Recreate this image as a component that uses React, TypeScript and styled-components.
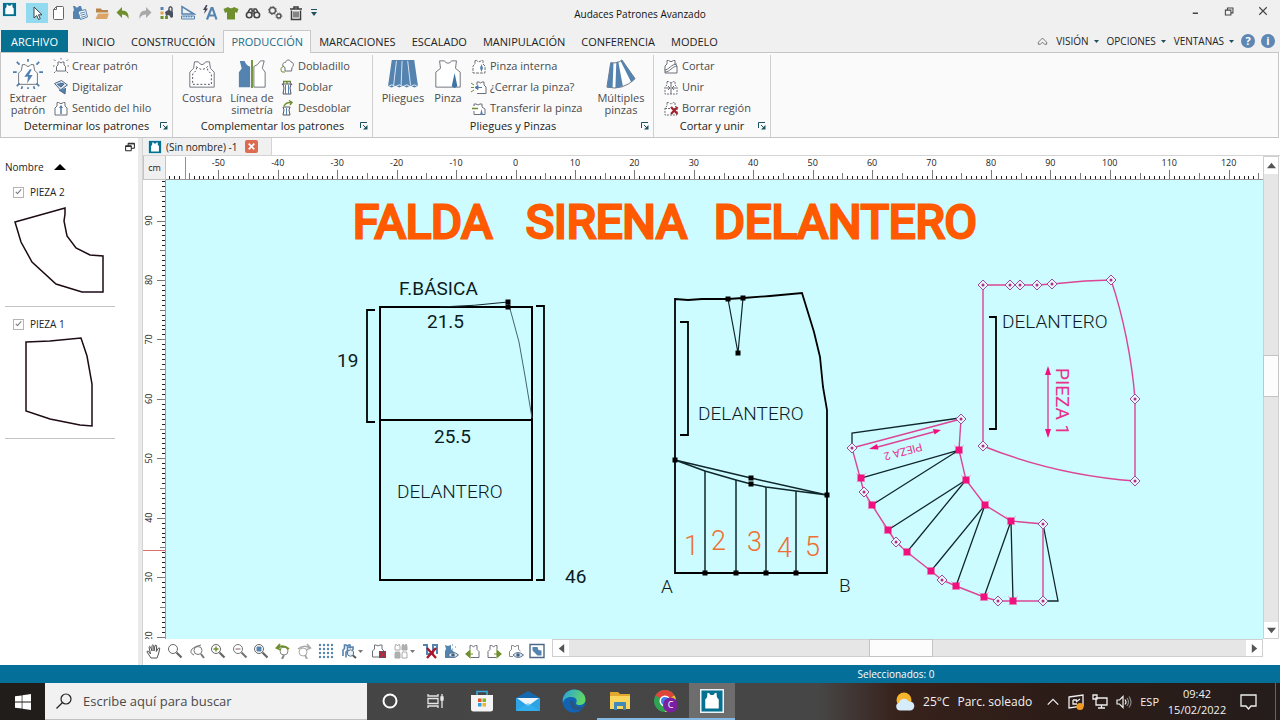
import React from "react";
import styled, { createGlobalStyle, css } from "styled-components";

const TEAL = "#04709a";
const BLUE = "#5583b0";
const GREEN = "#6f8f2e";
const GRAY = "#6b6f78";
const PINK = "#f0107e";
const UI_FONT = `"Open Sans", "Noto Sans", sans-serif`;

const GlobalStyle = createGlobalStyle`
  *, *::before, *::after { box-sizing: border-box; }
  body { margin: 0; background: #fff; font-family: ${UI_FONT}; font-size: 11px; line-height: 14px; color: #222; }
  button, input { font: inherit; color: inherit; }
  svg { display: block; flex: none; }
`;

const buttonReset = css`
  border: 0;
  padding: 0;
  margin: 0;
  background: none;
  display: flex;
  align-items: center;
  justify-content: center;
`;

const Page = styled.div`
  min-height: 100vh;
  display: flex;
  flex-direction: column;
`;

/* ---------- title bar ---------- */

const TitleBar = styled.header`
  display: grid;
  grid-template-columns: 1fr auto 1fr;
  align-items: center;
  height: 30px;
  flex: none;
  background: #f0f0f0;
`;
const QuickAccess = styled.div`
  display: flex;
  align-items: center;
  width: 320px;
  height: 26px;
  align-self: start;
`;
const QuickButton = styled.button<{ $active?: boolean; $grow?: number }>`
  ${buttonReset}
  flex: ${(p) => p.$grow ?? 22} 1 0;
  height: 20px;
  background: ${(p) => (p.$active ? "#92daf0" : "none")};
`;
const LogoSlot = styled.div`
  width: 26px;
  padding: 2px 0 0 2px;
  align-self: start;
`;
const WindowTitle = styled.h1`
  margin: 0;
  font-size: 10px;
  font-weight: 400;
  line-height: 14px;
  padding-bottom: 2px;
  color: #111;
`;
const WindowButtons = styled.div`
  display: flex;
  justify-self: end;
  align-self: start;
`;
const WindowButton = styled.button`
  ${buttonReset}
  width: 34px;
  height: 22px;
`;

/* ---------- ribbon ---------- */

const TabBar = styled.nav`
  display: flex;
  height: 22px;
  flex: none;
  padding: 0 2px 0 1px;
  background: #f0f0f0;
`;
const Tab = styled.button<{ $kind?: "file" | "active" }>`
  ${buttonReset}
  padding: 0 7px;
  border: 1px solid transparent;
  border-bottom: 0;
  ${(p) => p.$kind === "file" && css`background: #05708f; color: #fff; margin-right: 6px; padding: 0 9px;`}
  ${(p) =>
    p.$kind === "active" &&
    css`
      background: #fafafa;
      border-color: #c8c8c8;
      color: #1c6a88;
      position: relative;
      margin-bottom: -1px;
    `}
`;
const TabSpacer = styled.div`
  flex: 1;
`;
const MenuButton = styled.button`
  ${buttonReset}
  gap: 5px;
  padding: 0 4px;
  font-size: 10px;
`;
const RoundButton = styled.button`
  ${buttonReset}
  width: 20px;
`;

const Ribbon = styled.section`
  display: flex;
  height: 86px;
  flex: none;
  margin-right: 1px;
  border: 1px solid #c6c6c6;
  background: #fafafa;
`;
const Group = styled.div<{ $width: number }>`
  display: flex;
  flex-direction: column;
  width: ${(p) => p.$width}px;
  margin-top: 2px;
  border-right: 1px solid #cfcfcf;
`;
const GroupBody = styled.div<{ $gap?: number; $pad?: number }>`
  display: flex;
  flex: 1;
  gap: ${(p) => p.$gap ?? 4}px;
  padding: 0 4px 0 ${(p) => p.$pad ?? 6}px;
`;
const GroupFooter = styled.div`
  display: grid;
  grid-template-columns: 16px 1fr 16px;
  align-items: center;
  height: 20px;
  padding-bottom: 3px;
  text-align: center;
`;
const LauncherButton = styled.button`
  ${buttonReset}
`;
const BigButton = styled.button<{ $width: number }>`
  ${buttonReset}
  flex-direction: column;
  justify-content: flex-start;
  width: ${(p) => p.$width}px;
  padding-top: 4px;
  gap: 3px;
  line-height: 12px;
  color: #4c4c4c;
  white-space: pre-line;
`;
const SmallList = styled.div`
  display: flex;
  flex-direction: column;
  gap: 1px;
  padding-top: 1px;
`;
const SmallButton = styled.button`
  ${buttonReset}
  justify-content: flex-start;
  gap: 3px;
  height: 20px;
  color: #4c4c4c;
`;

/* ---------- work area ---------- */

const Main = styled.main`
  display: flex;
  flex: 1;
  min-height: 520px;
`;
const Sidebar = styled.aside`
  width: 138px;
  flex: none;
  padding: 2px 5px 0;
`;
const SidebarTop = styled.div`
  display: flex;
  justify-content: flex-end;
  height: 14px;
  align-items: center;
  margin-right: -2px;
`;
const SortButton = styled.button`
  ${buttonReset}
  gap: 10px;
  height: 21px;
  padding-top: 5px;
  font-size: 10px;
`;
const PieceList = styled.ul`
  list-style: none;
  margin: 0;
  padding: 0;
  width: 110px;
`;
const PieceItem = styled.li`
  height: 132px;
  padding-top: 10px;
  border-bottom: 1px solid #c4c4c4;
`;
const PieceLabel = styled.label`
  display: flex;
  align-items: center;
  gap: 6px;
  padding-left: 8px;
  height: 14px;
  font-size: 10px;
`;
const CheckBox = styled.input`
  appearance: none;
  margin: 0;
  width: 11px;
  height: 11px;
  border: 1px solid #b4b4b4;
  background: #fff;
  position: relative;
  &:checked::after {
    content: "";
    position: absolute;
    left: 3px;
    top: 0;
    width: 3px;
    height: 6px;
    border: solid #777;
    border-width: 0 1px 1px 0;
    transform: rotate(42deg);
  }
`;
const Splitter = styled.div`
  width: 4px;
  background: #eaeaea;
`;
const Document = styled.section`
  flex: 1;
  min-width: 0;
  display: flex;
  flex-direction: column;
  border-left: 1px solid #d4d4d4;
`;
const DocTabs = styled.div`
  height: 18px;
  display: flex;
  border-bottom: 1px solid #d4d4d4;
`;
const DocTab = styled.div`
  display: flex;
  align-items: center;
  gap: 4px;
  padding: 0 13px 0 5px;
  background: #f0f0f0;
  border-right: 1px solid #d4d4d4;
  font-size: 10px;
`;
const CloseTab = styled.button`
  ${buttonReset}
  width: 13px;
  height: 13px;
  margin-left: 4px;
  border-radius: 2px;
  background: #dc6b4f;
`;
const Workspace = styled.div`
  flex: 1;
  display: grid;
  grid-template-columns: 23px minmax(0, 1fr) 17px;
  grid-template-rows: 24px minmax(0, 1fr);
`;
const Unit = styled.div`
  display: flex;
  align-items: center;
  justify-content: center;
  background: #f0f0f0;
  border: 1px solid #c4c4c4;
  border-top: 0;
  font-size: 9px;
`;
const Cell = styled.div<{ $fill?: string }>`
  position: relative;
  overflow: hidden;
  background: ${(p) => p.$fill ?? "#fff"};
`;
const FillSvg = styled.svg`
  position: absolute;
  width: 100%;
  height: 100%;
`;
const ScrollV = styled.div`
  grid-row: 1 / span 2;
  grid-column: 3;
  margin-right: 1px;
  display: grid;
  grid-template-rows: 17px 182fr 40px 226fr 16px;
  background: #e6e6e6;
  border: 1px solid #cfcfcf;
`;
const ScrollH = styled.div`
  flex: 1;
  margin-right: 17px;
  height: 18px;
  display: grid;
  grid-template-columns: 16px 302fr 62px 315fr 16px;
  background: #e6e6e6;
  border: 1px solid #cfcfcf;
`;
const ScrollArrow = styled.button`
  ${buttonReset}
  background: #fff;
`;
const Thumb = styled.div`
  background: #fcfcfc;
  outline: 1px solid #c4c4c4;
`;
const BottomBar = styled.div`
  display: flex;
  height: 26px;
  flex: none;
`;
const ToolRow = styled.div`
  display: flex;
  width: 409px;
  height: 24px;
  padding-right: 4px;
`;
const Tool = styled.button<{ $grow?: number }>`
  ${buttonReset}
  flex: ${(p) => p.$grow ?? 22} 1 0;
  gap: 1px;
`;
const StatusBar = styled.footer`
  height: 18px;
  flex: none;
  display: grid;
  grid-template-columns: 67fr 33fr;
  align-items: center;
  background: ${TEAL};
  color: #fff;
  font-size: 10px;
`;
const StatusText = styled.span`
  grid-column: 2;
`;

/* ---------- taskbar ---------- */

const Taskbar = styled.div`
  display: flex;
  height: 37px;
  flex: none;
  color: #f2f2f2;
  background: linear-gradient(to right, #454545 0%, #464646 64%, #38221c 70%, #2c1c18 82%, #251d1b 100%);
`;
const StartButton = styled.button`
  ${buttonReset}
  width: 45px;
  background: #211d1b;
`;
const SearchBox = styled.label`
  display: flex;
  align-items: center;
  gap: 11px;
  width: 322px;
  padding-left: 11px;
  background: #f1f1f1;
  border-bottom: 1px solid #c0c0c0;
  color: #222;
`;
const SearchInput = styled.input`
  flex: 1;
  min-width: 0;
  border: 0;
  padding: 0;
  background: none;
  outline: 0;
  font-size: 13px;
  line-height: 20px;
  &::placeholder { color: #4a4a4a; opacity: 1; }
`;
const TaskButton = styled.button<{ $running?: boolean; $active?: boolean }>`
  ${buttonReset}
  width: 46px;
  background: ${(p) => (p.$active ? "#6d6d6d" : "none")};
  border-bottom: 2px solid ${(p) => (p.$running ? "#83b9e3" : "transparent")};
`;
const Tray = styled.div`
  display: flex;
  align-items: center;
  margin-left: auto;
  gap: 8px;
`;
const Weather = styled.button`
  ${buttonReset}
  gap: 8px;
  margin-right: 5px;
  font-size: 12px;
  line-height: 18px;
`;
const TrayButton = styled.button`
  ${buttonReset}
  min-width: 15px;
`;
const Clock = styled.time`
  width: 60px;
  text-align: center;
  font-size: 11px;
  line-height: 16px;
`;
const DesktopEdge = styled.div`
  width: 5px;
  align-self: stretch;
  border-left: 1px solid #6a625f;
`;

/* ---------- icons ---------- */

const SHIRT = "M8 3h4q4 6 8 0h4l1 7 4 4v16H3V14l4-4z";
const MINI = "M4 2.500h1.500q2.500 2.500 5 0H12v3.500l2 2v7H2V8l2-2z";

type IconProps = { size?: number; children: React.ReactNode; color?: string; w?: number };
const Icon = ({ size = 16, children, color = GRAY, w = 1 }: IconProps) => (
  <svg width={size} height={size} viewBox="0 0 16 16" fill="none" stroke={color} strokeWidth={w} aria-hidden="true">
    {children}
  </svg>
);
const Big = ({ children }: { children: React.ReactNode }) => (
  <svg width={30} height={30} viewBox="0 0 32 32" fill="none" stroke={GRAY} strokeWidth={1} aria-hidden="true">
    {children}
  </svg>
);

const Logo = ({ size }: { size: number }) => (
  <svg width={size} height={size} viewBox="0 0 16 16" aria-hidden="true">
    <rect x="0" y="0" width="16" height="16" fill="#e9f4f8" />
    <rect x="1" y="1" width="14" height="14" fill="#05708f" />
    <path d="M5 2.500l1.200.3.800 1.200h2l.8-1.200 1.200-.3.300 3L12.500 7v6h-9V7l1.200-1.500z" fill="#fff" />
  </svg>
);
const Arrow = ({ dir = "down", size = 5, color = "#1f4f5c" }: { dir?: "up" | "down" | "left" | "right"; size?: number; color?: string }) => {
  const d = { down: "M0 2h10L5 8z", up: "M0 8h10L5 2z", left: "M8 0v10L2 5z", right: "M2 0v10l6-5z" }[dir];
  return (
    <svg width={size} height={size} viewBox="0 0 10 10" aria-hidden="true">
      <path d={d} fill={color} />
    </svg>
  );
};
const Launcher = () => (
  <svg width="8" height="8" viewBox="0 0 8 8" fill="none" stroke="#1d5260" aria-hidden="true">
    <path d="M.5 6V.5H7" />
    <path d="M3 3l3 3" />
    <path d="M7.500 3v4.500H3z" fill="#1d5260" stroke="none" />
  </svg>
);

const quickIcons: { name: string; icon: React.ReactNode; active?: boolean; grow?: number }[] = [
  { name: "Seleccionar", active: true, icon: <Icon><path d="M5 2v11l2.700-2.500L9.500 14.500l1.800-.8L9.500 9.800H13z" fill="#fff" stroke="#444" /></Icon> },
  { name: "Nuevo", icon: <Icon><path d="M6.500 1.500H12.500q1 0 1 1v11q0 1-1 1h-8q-1 0-1-1V4.500z" fill="#fff" stroke="#666" /><path d="M6.500 1.500v3h-3" stroke="#666" /></Icon> },
  {
    name: "Patrones",
    icon: (
      <Icon>
        <path d="M1 1h2q2 3 4 0h2l1 3.500L12 7v7H1V7l1-2z" fill={BLUE} stroke="none" />
        <path d="M6 6.500l7.500-2 2 7.500-7 2.500z" fill="#fff" stroke={BLUE} />
        <path d="M8 8.300l5-1.300M8.500 10.300l5-1.300M9.200 12.300l5-1.500" stroke={BLUE} />
      </Icon>
    ),
  },
  { name: "Abrir", icon: <Icon><path d="M2 3.500h5l1 1.500h6v2.500H2z" fill="#b9854b" stroke="none" /><path d="M1.500 14L4 8.500h11L13 14z" fill="#dca568" stroke="none" /></Icon> },
  { name: "Deshacer", icon: <Icon><path d="M7 2v3.500c5 0 7 3 6.500 8.500C12 10.500 10 9.500 7 9.500V13L1.500 7.500z" fill={GREEN} stroke="none" /></Icon> },
  { name: "Rehacer", icon: <Icon><path d="M9 2v3.500c-5 0-7 3-6.500 8.500C4 10.500 6 9.500 9 9.500V13l5.500-5.500z" fill="#a9a9a9" stroke="none" /></Icon> },
  {
    name: "Colores",
    icon: (
      <Icon>
        <path d="M1.500 2h3v3h-3z" fill={BLUE} stroke="none" />
        <path d="M1.500 6.500h3v3h-3z" fill="#e0a34f" stroke="none" />
        <path d="M1.500 11h3v3h-3zM6 11h3v3H6z" fill={GREEN} stroke="none" />
        <path d="M6 7l4-2.500 4 3V12l-2 1-2-3-3 1z" fill="#4a5260" stroke="none" />
        <path d="M10 6V3q1.500-2.500 3 0v5" stroke="#4a5260" strokeWidth="1.400" />
      </Icon>
    ),
  },
  { name: "Medidas", icon: <Icon><path d="M2 1.500v7.500h12z" stroke={BLUE} strokeWidth="1.500" /><path d="M1.500 11h13v3h-13z" stroke={BLUE} fill="#dfe9f2" /><path d="M4 11v1.500M6.500 11v1.500M9 11v1.500M11.500 11v1.500" stroke={BLUE} /></Icon> },
  { name: "Texto", icon: <Icon><path d="M5 14.500L9.500 3h1l4 11.500M6.500 10.500h6.500" stroke={BLUE} strokeWidth="2.200" /><path d="M4 0L1 5h2L2 9l4-5.500H4L5.500 0z" fill="#445" stroke="none" /></Icon> },
  { name: "Prenda", icon: <Icon><path d="M5 2q3 2.500 6 0l4.500 2L14 8l-2-1v7.500H4V7L2 8 .5 4z" fill={GREEN} stroke="none" /></Icon> },
  { name: "Buscar", icon: <Icon color="#444"><circle cx="4.200" cy="10" r="2.800" strokeWidth="1.600" /><circle cx="11.800" cy="10" r="2.800" strokeWidth="1.600" /><path d="M3 7l2-3h2v5M13 7l-2-3H9v5M7 6h2" strokeWidth="1.400" /></Icon> },
  { name: "Configurar", icon: <Icon color="#555"><circle cx="5.500" cy="5.500" r="3" strokeWidth="1.400" /><circle cx="5.500" cy="5.500" r="4" strokeDasharray="1.500 1.600" /><circle cx="11.800" cy="11" r="2" strokeWidth="1.300" /><circle cx="11.800" cy="11" r="3" strokeDasharray="1.200 1.200" /></Icon> },
  { name: "Eliminar", icon: <Icon color="#3d3d3d"><path d="M2 4h12M6 4V2h4v2M3.500 5.500v9h9v-9" strokeWidth="1.500" /><path d="M6 6.500v6M8 6.500v6M10 6.500v6" strokeWidth="1.200" /></Icon> },
  { name: "Personalizar barra", grow: 13, icon: <svg width="6" height="8" viewBox="0 0 6 8" aria-hidden="true"><path d="M0 0h6v1H0zM0 3h6L3 7z" fill="#1d5260" /></svg> },
];

const Rays = () => <path d="M16 0v3M4 3l3 3M28 3l-3 3M0 14h4M28 14h4M4 29l3-3M28 29l-3-3M10 29l-1 3M16 30v2M22 29l1 3" stroke="#4f7dab" strokeWidth="1.800" />;
const MiniRays = () => <path d="M8 0v1.500M1 1.500L2.500 3M15 1.500L13.500 3M0 8h1.500M14.500 8H16M1 15l1.500-1.500M15 15l-1.500-1.500" />;

const ExtraerIcon = () => (
  <Big>
    <path d="M10 6h3q3 4 6 0h3l1 6 3 3v12H6V15l3-3z" fill="#fff" />
    <path d="M18 11l-6 8h4l-1 7 6-9h-4l3-6z" fill={BLUE} stroke="none" />
    <Rays />
  </Big>
);
const CosturaIcon = () => (
  <Big>
    <path d={SHIRT} fill="#fff" />
    <path d="M10 8q6 6 12 0v4l4 4v11H6V16l4-4z" stroke="#445" strokeDasharray="2 2" />
  </Big>
);
const SimetriaIcon = () => (
  <Big>
    <path d="M3 2h5q2 5 6 6v22H2V14l3-4z" fill={BLUE} stroke="none" />
    <path d="M29 2h-4q-3 5-7 6v22h12V14l-3-4z" fill="#fff" />
    <path d="M16 1v30" stroke={GREEN} strokeWidth="2" />
  </Big>
);
const PlieguesIcon = () => (
  <Big>
    <path d="M4 1h24l4 28-4 1.500-4-2-4 2-4-2-4 2-4-2-4 2L0 29z" fill={BLUE} stroke="none" />
    <path d="M9 2L6 28M15 2l-1 26M21 2l3 26" stroke="#dfe9f3" />
    <path d="M0 29.500l4-2 4 2 4-2 4 2 4-2 4 2 4-2 4 2" stroke="#eef3f8" />
  </Big>
);
const PinzaIcon = () => (
  <Big>
    <path d="M7 2h5q4 5 8 0h5l-1 8 5 4v16H3V14l5-4z" fill="#fff" />
    <path d="M23 15l3 14-3 2-3-2z" fill="#3f73a6" stroke="none" />
  </Big>
);
const MultiplesIcon = () => (
  <Big>
    <path d="M5 4q8 1 12-3l14 20Q18 34 1 30z" fill="#fff" />
    <path d="M5 4l3 .1L7 31l-6-1zM11 3.500l2-1 5 26.500-8 2.300zM15.500 2l1.500-1L31 21l-4 4z" fill={BLUE} stroke="none" />
  </Big>
);

type RibbonItem = { label: string; icon: React.ReactNode };
type RibbonGroup = {
  title: string;
  width: number;
  pad: number;
  gap?: number;
  big: (RibbonItem & { width: number })[];
  small: RibbonItem[];
  tail?: RibbonItem & { width: number };
};

const groups: RibbonGroup[] = [
  {
    title: "Determinar los patrones",
    width: 172,
    pad: 6,
    big: [{ label: "Extraer\npatrón", width: 42, icon: <ExtraerIcon /> }],
    small: [
      { label: "Crear patrón", icon: <Icon><path d="M5 4h1.500q1.500 2 3 0H11v3l1.500 1.500V13h-9V8.500L5 7z" fill="#fff" /><MiniRays /></Icon> },
      { label: "Digitalizar", icon: <Icon><path d="M1.500 4.500l7-3 6 4.500-7 5z" fill="#dfe6ee" stroke="#4d6787" /><path d="M4 5l4 3 3-3-4-1M6 11l6 4 .5-6" stroke="#4d6787" fill={BLUE} /></Icon> },
      { label: "Sentido del hilo", icon: <Icon><path d={MINI} fill="#fff" /><path d="M8 6v8" stroke="#4f7dab" strokeWidth="1.500" /><path d="M6 8l2-3 2 3z" fill="#4f7dab" stroke="none" /></Icon> },
    ],
  },
  {
    title: "Complementar los patrones",
    width: 200,
    pad: 6,
    gap: 2,
    big: [
      { label: "Costura", width: 46, icon: <CosturaIcon /> },
      { label: "Línea de\nsimetría", width: 50, icon: <SimetriaIcon /> },
    ],
    small: [
      { label: "Dobladillo", icon: <Icon><path d="M6 13V9.500C2 8 4 4 6.500 4.500 7.500 1 11 1.500 12 4c3 .5 3 3.500 1 5.500l-.5 3.500z" fill="#fff" /><path d="M5 8q-5 2-2 6h3" stroke={GREEN} /></Icon> },
      { label: "Doblar", icon: <Icon><path d="M4 5h8l-1 4 1 6H4l1-6z" fill="#fff" stroke="#556" /><path d="M6.500 6v9M9.500 6v9" stroke={BLUE} /><path d="M4 2.500h8M8 2.500V5" stroke={GREEN} strokeWidth="1.400" /><path d="M3 6l2-3M13 6l-2-3" stroke="#556" /></Icon> },
      { label: "Desdoblar", icon: <Icon><path d="M4 7h7l-1 3 1 5H4l1-5z" fill="#fff" stroke="#556" /><path d="M7.500 8v7" stroke={BLUE} /><path d="M5 6q2-4 7-3.500M10 .5l3 2-2 2.500" stroke={GREEN} strokeWidth="1.400" /></Icon> },
    ],
  },
  {
    title: "Pliegues y Pinzas",
    width: 281,
    pad: 8,
    gap: 3,
    big: [
      { label: "Pliegues", width: 44, icon: <PlieguesIcon /> },
      { label: "Pinza", width: 40, icon: <PinzaIcon /> },
    ],
    small: [
      { label: "Pinza interna", icon: <Icon><path d={MINI} fill="#fff" strokeDasharray="3 1" /><path d="M10.500 6l1.500 4-1.500 4L9 10z" fill={BLUE} stroke="none" /></Icon> },
      { label: "¿Cerrar la pinza?", icon: <Icon><path d="M6 6V3h2q2 2 3 0h2v3l2 2v6.500H6" fill="#fff" /><path d="M0 4l3 2M0 8.500h3M0 13l3-2" stroke={GREEN} /><path d="M4 8.500h7M4 8.500l3-2v4z" stroke="#4f7dab" fill="#4f7dab" /></Icon> },
      { label: "Transferir la pinza", icon: <Icon><path d="M3 6V4h2q2 2 4 0h2v3l3 2v5.500H3V11" fill="#fff" /><path d="M1 8.500h6" stroke={GREEN} strokeWidth="1.500" /><path d="M10.500 9l1.500 6H9z" fill={BLUE} stroke="none" /></Icon> },
    ],
    tail: { label: "Múltiples\npinzas", width: 56, icon: <MultiplesIcon /> },
  },
  {
    title: "Cortar y unir",
    width: 117,
    pad: 9,
    big: [],
    small: [
      { label: "Cortar", icon: <Icon><path d={MINI} fill="#fff" /><path d="M1.500 12C6 12 8 6 14 6M2 14C7 14 9 8.500 14 8" /></Icon> },
      { label: "Unir", icon: <Icon><path d={MINI} fill="#fff" strokeDasharray="2 1" /><path d="M8 3v12M3 9h3M13 9h-3" /><path d="M5 7l2 2-2 2M11 7L9 9l2 2" /></Icon> },
      { label: "Borrar región", icon: <Icon><path d={MINI} fill="#fff" strokeDasharray="2 1" /><path d="M2 8.500h12" strokeDasharray="2 1" /><path d="M8 7l6.500 7M14.500 7L8 14" stroke="#a3222e" strokeWidth="2.200" /></Icon> },
    ],
  },
];

const tabs: { label: string; kind?: "file" | "active" }[] = [
  { label: "ARCHIVO", kind: "file" },
  { label: "INICIO" },
  { label: "CONSTRUCCIÓN" },
  { label: "PRODUCCIÓN", kind: "active" },
  { label: "MARCACIONES" },
  { label: "ESCALADO" },
  { label: "MANIPULACIÓN" },
  { label: "CONFERENCIA" },
  { label: "MODELO" },
];

const Lens = ({ color = "#666", children }: { color?: string; children?: React.ReactNode }) => (
  <Icon color={color}>
    <circle cx="6" cy="6" r="4.500" fill="#fff" />
    <path d="M9.500 9.500l5 5" strokeWidth="2.200" />
    {children}
  </Icon>
);
const Eye = () => (
  <>
    <path d="M5 12q5-5 10.500 0-5.500 5-10.500 0z" fill="#dfe8f1" stroke="#55718f" />
    <circle cx="10" cy="12" r="1.800" fill="#42617f" stroke="none" />
  </>
);

const tools: { name: string; icon: React.ReactNode; grow?: number; drop?: boolean }[] = [
  { name: "Mano", icon: <Icon color="#555"><path d="M5 15L1 9q0-1.500 1.500-.8L4.500 11 3 4q.5-1.500 1.600 0L6 8V2.500q1-1.500 1.700 0L8 8l1-5.500q1.200-1 1.700.3L10.300 8.500 12.500 5q1.500-.5 1.200.8L12.500 11 11 15z" fill="#fff" /></Icon> },
  { name: "Zoom", icon: <Lens /> },
  { name: "Zoom ventana", icon: <Icon color="#777"><circle cx="9" cy="7.500" r="4" /><path d="M12 11l3 4" strokeWidth="2" /><path d="M5 12q-5-2-2-6 3-3 9-4" /></Icon> },
  { name: "Acercar", icon: <Lens><path d="M6 3.500v5M3.500 6h5" stroke={GREEN} strokeWidth="1.500" /></Lens> },
  { name: "Alejar", icon: <Lens color="#777"><path d="M3.500 6h5" stroke="#8b5a7a" /></Lens> },
  { name: "Ajustar", icon: <Lens><path d="M4 4h4v4H4z" fill={BLUE} stroke={BLUE} /></Lens> },
  { name: "Vista anterior", icon: <Icon color="#888"><circle cx="9" cy="8" r="4" fill="#fff" /><path d="M9 12l-2 4" strokeWidth="2" /><path d="M2 5q6-4 12 1M5 1L1.500 5 6 7" stroke={GREEN} strokeWidth="1.800" /></Icon> },
  { name: "Vista siguiente", icon: <Icon color="#aaa"><circle cx="7" cy="9" r="4" fill="#fff" /><path d="M9 12l2 4" strokeWidth="2" /><path d="M14 5Q8 1 2 6M11 1l3.500 4L10 7" strokeWidth="1.500" /></Icon> },
  {
    name: "Rejilla",
    icon: (
      <Icon>
        {[2, 6, 10, 14].map((x) => [2, 6, 10, 14].map((y) => <circle key={`${x}-${y}`} cx={x} cy={y} r="1.200" fill={BLUE} stroke="none" />))}
      </Icon>
    ),
  },
  {
    name: "Buscar piezas",
    grow: 32,
    drop: true,
    icon: (
      <Icon color={BLUE}>
        <path d="M2 13V7l1.500-1.500V2H5q1 1.500 2.500 0H9v2" strokeWidth="1.600" />
        <path d="M5 14.500V9l1.500-1.500V4H8q1 1.500 2.500 0H12v3" strokeWidth="1.600" />
        <circle cx="9.500" cy="10" r="3.200" fill="#e8eff6" stroke="#51718f" />
        <path d="M12 12.500l3 2.500" stroke="#555" strokeWidth="2" />
      </Icon>
    ),
  },
  { name: "Quitar pieza", icon: <Icon><path d="M3.500 2H5q2 2 4 0h2v4l2 2v6H1.500V8l2-2z" fill="#fff" /><path d="M8 8h7v7H8z" fill="#556" stroke="none" /><path d="M9 9l5 5M14 9l-5 5" stroke="#c02636" strokeWidth="1.800" /></Icon> },
  {
    name: "Agrupar",
    grow: 30,
    drop: true,
    icon: (
      <Icon color="#aaa">
        <path d="M2 7V4l.5-2.500h1L4.500 3l1-1.500h1L7 4v3z" />
        <path d="M9 7V4l.5-2.500h1l1 1.500 1-1.500h1L14 4v3zM2 15v-4l.5-2h4L7 11v4z" fill="#b0b0b0" />
        <path d="M9 15v-4l.5-2h4l.5 2v4z" />
      </Icon>
    ),
  },
  { name: "Borrar guías", icon: <Icon color={BLUE}><path d="M1 2h4v9h6V2h4v9" strokeWidth="2" /><path d="M5 5l9 10M14 5L5 15" stroke="#a8182a" strokeWidth="2.400" /></Icon> },
  { name: "Ver relleno", icon: <Icon><path d="M2 2l3 1 3-1v4l4 4v5H2V8l1-2z" fill={BLUE} stroke="none" /><path d="M9 2h2M12 4h2M9 6h2" stroke={BLUE} strokeDasharray="1 1" /><Eye /></Icon> },
  { name: "Pieza anterior", icon: <Icon><path d="M5 6.500V2.500h1.500q2 2.500 4 0H12v4l2 2v6H6" /><path d="M8 11H3M5 7.500L1 11l4 3.500z" stroke={GREEN} fill={GREEN} strokeWidth="1.200" /></Icon> },
  { name: "Pieza siguiente", icon: <Icon><path d="M10 14.500H2v-6l2-2v-4h1.500q2 2.500 4 0H11v4" /><path d="M8 11h5M11 7.500l4 3.500-4 3.500z" stroke={GREEN} fill={GREEN} strokeWidth="1.200" /></Icon> },
  { name: "Ver contorno", icon: <Icon color="#888"><path d="M5 13.500H1.500V8.500l2-2v-4H5q2 2.500 4 0h1.500v4l2 1.500" /><Eye /></Icon> },
  { name: "Imagen", icon: <Icon color="#4d6787"><path d="M1 1.500h14v13H1z" fill="#fff" strokeWidth="1.400" /><path d="M3.500 4h5l1 3 3 .5v5h-4l-5-5z" fill={BLUE} stroke="none" /></Icon> },
];

/* ---------- rulers and drawing ---------- */

const PX_PER_CM = 5.943;
// Screen position of the drawing's 0 cm mark, and the corner of the visible sheet.
const ZERO_X = 515.5;
const ZERO_Y = 755.4;
const VIEW_X = 166;
const VIEW_Y = 180;
const STEPS = 12;

const RulerH = () => {
  const marks: React.ReactNode[] = [];
  for (let i = -6 * STEPS; i <= 13 * STEPS; i++) {
    const x = ZERO_X - VIEW_X + (i * 10 * PX_PER_CM) / STEPS;
    const major = i % STEPS === 0;
    const len = major ? 9 : i % (STEPS / 2) === 0 ? 6 : 3;
    marks.push(<path key={i} d={`M${Math.round(x) + 0.5} ${23 - len}V23`} stroke={len > 3 ? "#777" : "#222"} />);
    if (major && i > -6 * STEPS && i < 13 * STEPS)
      marks.push(
        <text key={`t${i}`} x={x} y="10" fontSize="9" textAnchor="middle" fill="#222">
          {(i / STEPS) * 10}
        </text>
      );
  }
  return (
    <FillSvg>
      {marks}
      <path d="M19.500 1V23" stroke="#fff" strokeWidth="3" />
      <path d="M19.500 1V23" stroke="#d9706c" />
      <path d="M0 23.500H4000" stroke="#999" />
    </FillSvg>
  );
};

const RulerV = () => {
  const marks: React.ReactNode[] = [];
  for (let i = 2 * STEPS; i <= 9.5 * STEPS + 2; i++) {
    const y = ZERO_Y - VIEW_Y - (i * 10 * PX_PER_CM) / STEPS;
    const major = i % STEPS === 0;
    const len = major ? 8 : i % (STEPS / 2) === 0 ? 5 : 3;
    marks.push(<path key={i} d={`M${22 - len} ${Math.round(y) + 0.5}H22`} stroke={len > 3 ? "#777" : "#222"} />);
    if (major)
      marks.push(
        <text key={`t${i}`} transform={`translate(9 ${y}) rotate(-90)`} fontSize="9" textAnchor="middle" fill="#222">
          {(i / STEPS) * 10}
        </text>
      );
  }
  return (
    <FillSvg>
      {marks}
      <path d="M0 370.500H22" stroke="#d9706c" />
      <path d="M22.500 0V4000" stroke="#999" />
    </FillSvg>
  );
};

const CadText = styled.text<{ $size?: number; $weight?: number; $fill?: string }>`
  font-family: Roboto, sans-serif;
  font-size: ${(p) => p.$size ?? 19}px;
  font-weight: ${(p) => p.$weight ?? 300};
  fill: ${(p) => p.$fill ?? "#0d1b1e"};
`;
const TitleText = styled.text`
  font-family: Roboto, sans-serif;
  font-size: 47px;
  font-weight: 400;
  fill: #ff5a00;
  stroke: #ff5a00;
  stroke-width: 3px;
`;

type Pt = [number, number];
const Node = ({ at: [x, y] }: { at: Pt }) => <rect x={x - 2.5} y={y - 2.5} width="5" height="5" fill="#000" />;
const PinkNode = ({ at: [x, y] }: { at: Pt }) => (
  <g>
    <path d={`M${x - 5} ${y - 5}l10 10M${x + 5} ${y - 5}l-10 10`} stroke="#f48cc4" strokeDasharray="1 1" />
    <rect x={x - 3.5} y={y - 3.5} width="7" height="7" fill={PINK} />
  </g>
);
const Diamond = ({ at: [x, y] }: { at: Pt }) => (
  <g>
    <path d={`M${x} ${y - 5}l5 5-5 5-5-5z`} fill="#e9f6ff" stroke="#9a4d9e" />
    <circle cx={x} cy={y} r="1.500" fill="#b03080" />
  </g>
);

const blackNodes: Pt[] = [
  [508, 302], [508, 307], [728, 299], [743, 298], [738, 353], [675, 460], [751, 478], [751, 484],
  [827, 495], [705, 573], [736, 573], [766, 573], [796, 573],
];
const pinkNodes: Pt[] = [
  [959, 450], [966, 480], [985, 505], [1011, 521], [861, 478], [872, 505], [888, 530], [907, 552],
  [931, 571], [956, 586], [984, 597], [1013, 601],
];
const diamonds: Pt[] = [
  [983, 285], [1010, 285], [1020, 285], [1037, 285], [1052, 284], [1111, 280], [1135, 399], [1135, 481],
  [983, 446], [852, 448], [961, 419], [1043, 524], [1043, 601], [998, 601], [942, 580], [896, 542], [864, 492],
];

const Drawing = () => (
  <FillSvg role="img" aria-label="Falda sirena delantero">
    <g transform={`translate(${-VIEW_X} ${-VIEW_Y})`} fill="none">
      <TitleText x="353" y="238">FALDA</TitleText>
      <TitleText x="526" y="238">SIRENA</TitleText>
      <TitleText x="714" y="238">DELANTERO</TitleText>

      <g stroke="#000" strokeWidth="2">
        <path d="M380 307H532V580H380zM380 420H532" />
        <path d="M375 310H367V422H375M536 306H544V580H536" strokeWidth="1.800" />
        <path d="M675 299L688 300 702 299 728 299 743 298 770 296 802 293 814 332 820 357 823 387 827 410V573H675z" strokeWidth="1.800" />
        <path d="M680 322H688V435H680M989 317H996V429H989" strokeWidth="1.800" />
      </g>
      <g stroke="#10282c" strokeWidth="1.200">
        <path d="M440 307Q475 306 508 302" strokeWidth="1" />
        <path d="M508 302L512 316 519 342 525 376 532 418" stroke="#44666c" strokeWidth="1" />
        <path d="M728 299L738 353 743 298" />
        <path d="M675 460L751 478 827 495M675 460L705 471 736 480 751 484 766 487 796 491 827 495" strokeWidth="1.500" />
        <path d="M705 471V573M736 480V573M766 487V573M796 491V573" strokeWidth="1.500" />
        <path d="M852 448V433L960 418M861 478L959 450 872 505M888 530L966 480 907 552M931 571L985 505 956 586M984 597L1011 521 1013 601M1043 524L1058 601H1043" strokeWidth="1.300" />
      </g>
      <g stroke="#dc4596" strokeWidth="1.400">
        <path d="M983 285H1037L1052 284 1085 281 1111 280C1123 315 1132 360 1135 399V481Q1055 475 983 446z" />
        <path d="M852 448L961 419 959 450 966 480 985 505 1011 521 1043 524V601H998L984 597 956 586 942 580 931 571 907 552 896 542 888 530 872 505 864 492z" />
        <path d="M1048 370V434M874 448L937 431" />
      </g>
      <g fill={PINK}>
        <path d="M1048 366l3 9h-6zM1048 438l3-9h-6zM869 449l8-5 1.500 5.500zM941 430l-8-1 1.500 5.500z" />
      </g>
      {blackNodes.map((p, i) => <Node key={i} at={p} />)}
      {diamonds.map((p, i) => <Diamond key={i} at={p} />)}
      {pinkNodes.map((p, i) => <PinkNode key={i} at={p} />)}

      <CadText x="399" y="295" $weight={400}>F.BÁSICA</CadText>
      <CadText x="427" y="328" $weight={400}>21.5</CadText>
      <CadText x="337" y="367" $weight={400}>19</CadText>
      <CadText x="434" y="443" $weight={400}>25.5</CadText>
      <CadText x="397" y="498">DELANTERO</CadText>
      <CadText x="565" y="583" $weight={400}>46</CadText>
      <CadText x="698" y="420">DELANTERO</CadText>
      <CadText x="1002" y="328">DELANTERO</CadText>
      <CadText x="661" y="593">A</CadText>
      <CadText x="839" y="592">B</CadText>
      <CadText x="684" y="555" $size={27} $fill="#ee7033">1</CadText>
      <CadText x="711" y="550" $size={27} $fill="#ee7033">2</CadText>
      <CadText x="747" y="551" $size={27} $fill="#ee7033">3</CadText>
      <CadText x="777" y="557" $size={27} $fill="#ee7033">4</CadText>
      <CadText x="805" y="556" $size={27} $fill="#ee7033">5</CadText>
      <CadText transform="translate(1056 368) rotate(90)" $weight={400} $fill="#e8308a">PIEZA 1</CadText>
      <CadText transform="translate(921 443) rotate(165)" $size={11} $weight={400} $fill="#e8308a">PIEZA 2</CadText>
    </g>
  </FillSvg>
);

const pieces = [
  { name: "PIEZA 2", d: "M10 20L60 6V12L59 19 62 34 71 46 85 53 98 54V90H77L51 82 27 60 16 40z" },
  { name: "PIEZA 1", d: "M21 8L45 7 76 4 82 22 87 50V92L75 91 45 85 21 77z" },
];

/* ---------- taskbar icons ---------- */

const Windows = () => (
  <svg width="16" height="16" viewBox="0 0 16 16" fill="#fff" aria-hidden="true">
    <path d="M0 2.300l6.700-.9v6.200H0zM7.400 1.300L16 0v7.600H7.400zM0 8.400h6.700v6.200L0 13.700zM7.400 8.400H16V16l-8.600-1.300z" />
  </svg>
);
const taskIcons: { name: string; running?: boolean; active?: boolean; icon: React.ReactNode }[] = [
  { name: "Cortana", icon: <svg width="16" height="16" viewBox="0 0 16 16"><circle cx="8" cy="8" r="6.500" fill="none" stroke="#fff" strokeWidth="2" /></svg> },
  { name: "Vista de tareas", icon: <svg width="18" height="16" viewBox="0 0 18 16" fill="none" stroke="#e6e6e6" strokeWidth="1.300"><path d="M1 1v2h10V1M1 5.500h10v5H1zM1 15v-2h10v2M15 1v14" /><path d="M14 4h2v3h-2z" fill="#fff" /></svg> },
  {
    name: "Microsoft Store",
    icon: (
      <svg width="24" height="24" viewBox="0 0 24 24">
        <path d="M7 6V2.500h10V6" fill="none" stroke="#39a9dc" strokeWidth="1.600" />
        <path d="M1 6h22v14q0 2.500-2.500 2.500h-17Q1 22.500 1 20z" fill="#f4f4f4" />
        <path d="M8 9.500h3.500V13H8z" fill="#e2552c" /><path d="M12.500 9.500H16V13h-3.500z" fill="#7db52f" />
        <path d="M8 14h3.500v3.500H8z" fill="#2f9fdc" /><path d="M12.500 14H16v3.500h-3.500z" fill="#f3b62a" />
      </svg>
    ),
  },
  { name: "Correo", icon: <svg width="24" height="24" viewBox="0 0 24 24"><path d="M0 9L12 2l12 7v4H0z" fill="#1468b0" /><path d="M0 9h24v13H0z" fill="#2ba3e4" /><path d="M1 9h22l-11 8z" fill="#eef6fb" /><path d="M0 22l12-8 12 8z" fill="#38b6f2" opacity=".6" /></svg> },
  {
    name: "Edge",
    icon: (
      <svg width="24" height="24" viewBox="0 0 24 24">
        <defs><linearGradient id="edge" x1="0" y1="0" x2="1" y2=".3"><stop offset="0" stopColor="#2b9fe0" /><stop offset="1" stopColor="#5fd668" /></linearGradient></defs>
        <circle cx="12" cy="12" r="11.500" fill="#1163b4" />
        <path d="M.8 10C2 4 7 .5 12 .5c7 0 11.500 5 11.500 10 0 4-3 5.500-6 5.500-3.500 0-4-1.500-3-3 1-2-1-5-5-5S2 9.500.8 14z" fill="url(#edge)" />
        <path d="M9 11c-3 5 1 11 8 10 2-.3 4-2 5-4-5 2.500-10 .5-10-4z" fill="#454545" opacity=".45" />
      </svg>
    ),
  },
  { name: "Explorador", running: true, icon: <svg width="22" height="22" viewBox="0 0 22 22"><path d="M1 2h8l2 2h10v15H1z" fill="#e3a92f" /><path d="M1 6h20v13H1z" fill="#fbd65f" /><path d="M5 20v-7q0-1 1-1h10q1 0 1 1v7h-3v-4H8v4z" fill="#4189b8" /></svg> },
  {
    name: "Chrome",
    running: true,
    icon: (
      <svg width="26" height="24" viewBox="0 0 26 24">
        <circle cx="12" cy="12" r="11" fill="#2fa352" />
        <path d="M12 12L2.500 6.500A11 11 0 0 1 21.500 6.500z" fill="#e0453a" />
        <path d="M12 12l9.500-5.500A11 11 0 0 1 12 23z" fill="#f4c233" />
        <circle cx="12" cy="12" r="5.500" fill="#fff" /><circle cx="12" cy="12" r="4" fill="#3f80e8" />
        <circle cx="17.500" cy="16" r="7.500" fill="#7a1fa0" />
        <text x="17.500" y="19" fontSize="9" textAnchor="middle" fill="#fff">C</text>
      </svg>
    ),
  },
  { name: "Audaces", running: true, active: true, icon: <Logo size={24} /> },
];

export default function App() {
  return (
    <Page>
      <GlobalStyle />
      <TitleBar>
        <QuickAccess>
          <LogoSlot><Logo size={15} /></LogoSlot>
          {quickIcons.map((q) => (
            <QuickButton key={q.name} aria-label={q.name} $active={q.active} $grow={q.grow}>{q.icon}</QuickButton>
          ))}
        </QuickAccess>
        <WindowTitle>Audaces Patrones Avanzado</WindowTitle>
        <WindowButtons>
          <WindowButton aria-label="Minimizar"><Icon size={12} color="#444"><path d="M5 11h7" strokeWidth="2" /></Icon></WindowButton>
          <WindowButton aria-label="Restaurar"><Icon size={11} color="#444"><path d="M2 6h8v7H2zM5 6V3h8v7h-3" strokeWidth="1.500" /></Icon></WindowButton>
          <WindowButton aria-label="Cerrar"><Icon size={12} color="#444"><path d="M3 3l10 10M13 3L3 13" strokeWidth="1.500" /></Icon></WindowButton>
        </WindowButtons>
      </TitleBar>

      <TabBar>
        {tabs.map((t) => <Tab key={t.label} $kind={t.kind}>{t.label}</Tab>)}
        <TabSpacer />
        <RoundButton aria-label="Contraer cinta"><Icon size={11} color="#444"><path d="M2 9l6-6 6 6v3h-3L8 9l-3 3H2z" /></Icon></RoundButton>
        {["VISIÓN", "OPCIONES", "VENTANAS"].map((m) => (
          <MenuButton key={m}>{m}<Arrow /></MenuButton>
        ))}
        {["?", "i"].map((s) => (
          <RoundButton key={s} aria-label={s === "?" ? "Ayuda" : "Información"}>
            <svg width="14" height="14" viewBox="0 0 14 14" aria-hidden="true">
              <circle cx="7" cy="7" r="7" fill="#5e87b3" />
              <text x="7" y="11" fontSize="11" fontWeight="700" textAnchor="middle" fill="#fff">{s}</text>
            </svg>
          </RoundButton>
        ))}
      </TabBar>

      <Ribbon>
        {groups.map((g) => (
          <Group key={g.title} $width={g.width}>
            <GroupBody $pad={g.pad} $gap={g.gap}>
              {g.big.map((b) => <BigButton key={b.label} $width={b.width}>{b.icon}<span>{b.label}</span></BigButton>)}
              <SmallList>
                {g.small.map((s) => <SmallButton key={s.label}>{s.icon}{s.label}</SmallButton>)}
              </SmallList>
              {g.tail && (
                <>
                  <TabSpacer />
                  <BigButton $width={g.tail.width}>{g.tail.icon}<span>{g.tail.label}</span></BigButton>
                </>
              )}
            </GroupBody>
            <GroupFooter>
              <span />
              <span>{g.title}</span>
              <LauncherButton aria-label={`Opciones de ${g.title}`}><Launcher /></LauncherButton>
            </GroupFooter>
          </Group>
        ))}
      </Ribbon>

      <Main>
        <Sidebar>
          <SidebarTop><Icon size={10} color="#222"><path d="M1 6h9v8H1zM5 6V2h10v8h-5M1 7h9M5 3h10" strokeWidth="1.600" /></Icon></SidebarTop>
          <SortButton>Nombre<svg width="12" height="6" viewBox="0 0 12 6" aria-hidden="true"><path d="M0 6h12L6 0z" /></svg></SortButton>
          <PieceList>
            {pieces.map((p) => (
              <PieceItem key={p.name}>
                <PieceLabel><CheckBox type="checkbox" defaultChecked />{p.name}</PieceLabel>
                <svg width="110" height="100" viewBox="0 -3 110 100" fill="none" stroke="#1c0a14" strokeWidth="1.500" aria-hidden="true"><path d={p.d} /></svg>
              </PieceItem>
            ))}
          </PieceList>
        </Sidebar>
        <Splitter />
        <Document>
          <DocTabs>
            <DocTab>
              <Logo size={14} />
              (Sin nombre) -1
              <CloseTab aria-label="Cerrar documento"><Icon size={9} color="#fff" w={3}><path d="M3 3l10 10M13 3L3 13" /></Icon></CloseTab>
            </DocTab>
          </DocTabs>
          <Workspace>
            <Unit>cm</Unit>
            <Cell><RulerH /></Cell>
            <ScrollV>
              <ScrollArrow aria-label="Subir"><Arrow dir="up" size={9} color="#555" /></ScrollArrow>
              <span />
              <Thumb />
              <span />
              <ScrollArrow aria-label="Bajar"><Arrow dir="down" size={9} color="#555" /></ScrollArrow>
            </ScrollV>
            <Cell><RulerV /></Cell>
            <Cell $fill="#ccfcff"><Drawing /></Cell>
          </Workspace>
          <BottomBar>
            <ToolRow>
              {tools.map((t) => (
                <Tool key={t.name} aria-label={t.name} $grow={t.grow}>
                  {t.icon}
                  {t.drop && <Arrow color="#777" />}
                </Tool>
              ))}
            </ToolRow>
            <ScrollH>
              <ScrollArrow aria-label="Izquierda"><Arrow dir="left" size={9} color="#555" /></ScrollArrow>
              <span />
              <Thumb />
              <span />
              <ScrollArrow aria-label="Derecha"><Arrow dir="right" size={9} color="#555" /></ScrollArrow>
            </ScrollH>
          </BottomBar>
        </Document>
      </Main>

      <StatusBar><StatusText>Seleccionados: 0</StatusText></StatusBar>

      <Taskbar>
        <StartButton aria-label="Inicio"><Windows /></StartButton>
        <SearchBox>
          <svg width="16" height="16" viewBox="0 0 16 16" fill="none" stroke="#222" strokeWidth="1.200" aria-hidden="true"><circle cx="10" cy="6" r="5" /><path d="M6.500 9.500L.5 15.500" /></svg>
          <SearchInput type="text" aria-label="Buscar" placeholder="Escribe aquí para buscar" />
        </SearchBox>
        {taskIcons.map((t) => (
          <TaskButton key={t.name} aria-label={t.name} $running={t.running} $active={t.active}>{t.icon}</TaskButton>
        ))}
        <Tray>
          <Weather>
            <svg width="20" height="20" viewBox="0 0 20 20" aria-hidden="true">
              <circle cx="9" cy="8" r="7.500" fill="#f8b62d" />
              <path d="M5 18.500a4 4 0 0 1-1-7.800A5.500 5.500 0 0 1 14 9.500a4.500 4.500 0 0 1 1.500 9z" fill="#d6ecfb" />
            </svg>
            <span>25°C</span>
            <span>Parc. soleado</span>
          </Weather>
          <TrayButton aria-label="Iconos ocultos"><Icon size={14} color="#eee" w={1.5}><path d="M2 11l6-6 6 6" /></Icon></TrayButton>
          <TrayButton aria-label="Ink"><Icon color="#eee" w={1.3}><path d="M1 3l14-2v11L1 14z" /><path d="M5 6h4M5 6v4h4M8 8l4-3" /><circle cx="12" cy="12.500" r="3.500" fill="#f29a1f" stroke="none" /></Icon></TrayButton>
          <TrayButton aria-label="Red"><Icon color="#eee" w={1.3}><path d="M4 4h11v7H4zM6 14h7M9.500 11v3M1 1h4v4H1z" /></Icon></TrayButton>
          <TrayButton aria-label="Volumen"><Icon color="#eee" w={1.2}><path d="M1 6v4h2.500L7 13.500v-11L3.500 6zM9 5.500q2 2.500 0 5" /><path d="M11 4q3 4 0 8M13 2.500q4 5.500 0 11" stroke="#8a8a8a" /></Icon></TrayButton>
          <TrayButton>ESP</TrayButton>
          <Clock>09:42<br />15/02/2022</Clock>
          <TrayButton aria-label="Notificaciones"><svg width="32" height="18" viewBox="-5 0 32 18" fill="none" stroke="#eee" strokeWidth="1.300" aria-hidden="true"><path d="M1 2h15v11h-5l-2.500 3L6 13H1z" /></svg></TrayButton>
          <DesktopEdge />
        </Tray>
      </Taskbar>
    </Page>
  );
}
